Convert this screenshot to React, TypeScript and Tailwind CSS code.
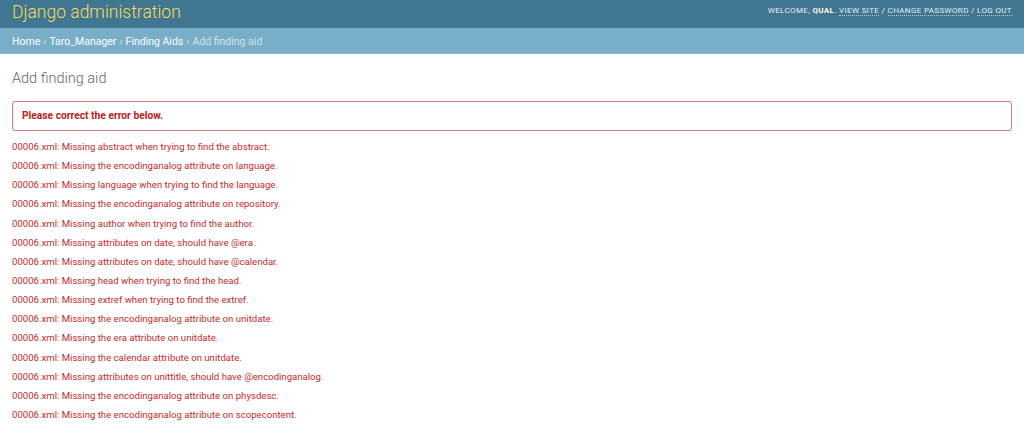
import React from "react";

const errors = [
  "Missing abstract when trying to find the abstract.",
  "Missing the encodinganalog attribute on language.",
  "Missing language when trying to find the language.",
  "Missing the encodinganalog attribute on repository.",
  "Missing author when trying to find the author.",
  "Missing attributes on date, should have @era.",
  "Missing attributes on date, should have @calendar.",
  "Missing head when trying to find the head.",
  "Missing extref when trying to find the extref.",
  "Missing the encodinganalog attribute on unitdate.",
  "Missing the era attribute on unitdate.",
  "Missing the calendar attribute on unitdate.",
  "Missing attributes on unittitle, should have @encodinganalog.",
  "Missing the encodinganalog attribute on physdesc.",
  "Missing the encodinganalog attribute on scopecontent.",
];

export default function App() {
  return (
    <div
      className="w-[1024px] h-[428px] overflow-hidden bg-white"
      style={{ fontFamily: "Roboto, 'Liberation Sans', sans-serif" }}
    >
      <header className="h-[28px] bg-[#417690] flex items-center justify-between px-[12px]">
        <h1 className="text-[17.5px] leading-none font-light text-[#f5dd5d] -mt-[2px]">
          Django administration
        </h1>
        <div className="text-[8px] uppercase tracking-[0.35px] text-[#e6eef2] -mt-[6px]">
          Welcome, <strong className="font-bold text-[#fffbe0]">Qual</strong>.{" "}
          <span className="border-b border-dotted border-[#b5ccd8]">View site</span> /{" "}
          <span className="border-b border-dotted border-[#b5ccd8]">Change password</span> /{" "}
          <span className="border-b border-dotted border-[#b5ccd8]">Log out</span>
        </div>
      </header>
      <nav className="h-[26px] bg-[#79aec8] border-b-[1px] border-[#8fbcd2] flex items-center px-[12px] pt-[2px] text-[10.5px] text-white">
        <span>Home</span>
        <span className="mx-[3px] text-[#cfe3ec]">›</span>
        <span>Taro_Manager</span>
        <span className="mx-[3px] text-[#cfe3ec]">›</span>
        <span>Finding Aids</span>
        <span className="mx-[3px] text-[#cfe3ec]">›</span>
        <span className="text-[#cfe3ec]">Add finding aid</span>
      </nav>
      <main className="px-[12px] pt-[16px]">
        <h2 className="text-[14.5px] font-light text-[#666] leading-[18px]">Add finding aid</h2>
        <div className="mt-[13px] border border-[#d67d84] rounded-[3px] h-[30px] flex items-center px-[9px] text-[10.25px] font-bold text-[#ba2121]">
          Please correct the error below.
        </div>
        <ul className="mt-[6px]">
          {errors.map((e, i) => (
            <li key={i} className="h-[19.15px] leading-[19px] text-[9.6px] text-[#bf2b2b]">
              00006.xml: {e}
            </li>
          ))}
        </ul>
      </main>
    </div>
  );
}
